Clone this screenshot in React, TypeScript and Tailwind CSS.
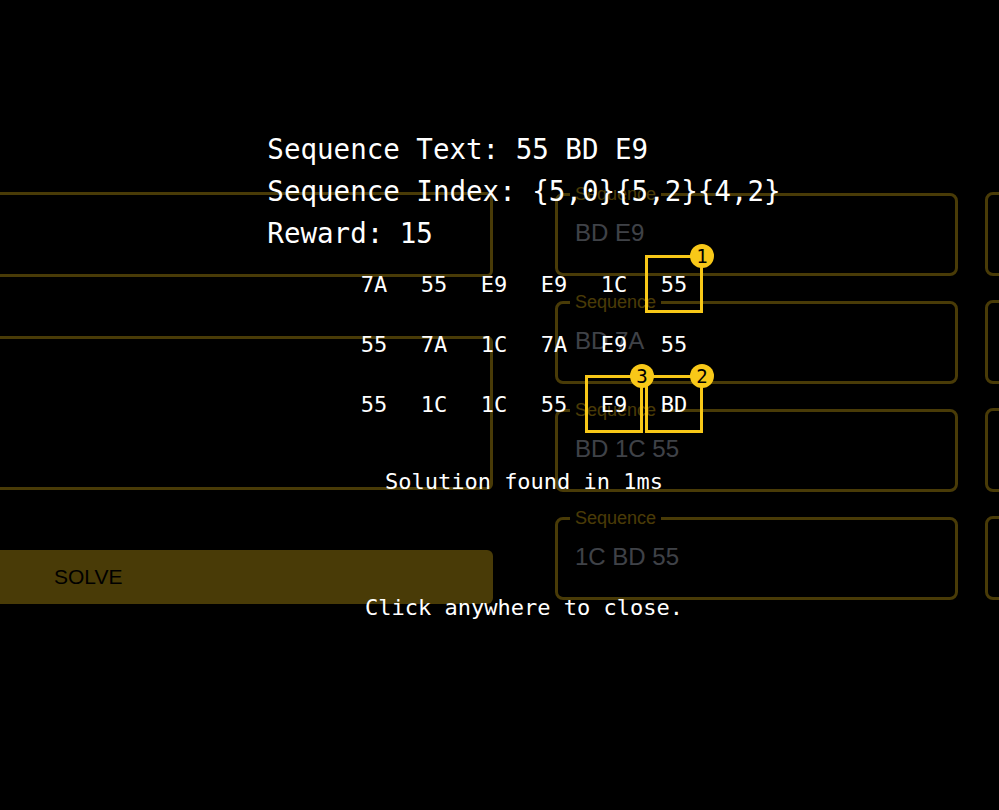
const grid = [
  ['7A', '55', 'E9', 'E9', '1C', '55'],
  ['55', '7A', '1C', '7A', 'E9', '55'],
  ['55', '1C', '1C', '55', 'E9', 'BD'],
];

// solution path as {x,y} -> step number
const path: Record<string, number> = { '5,0': 1, '5,2': 2, '4,2': 3 };

const sequences = ['BD E9', 'BD 7A', 'BD 1C 55', '1C BD 55'];

function SequenceBox({ text }: { text: string }) {
  return (
    <fieldset className="h-[92px] rounded-lg border-[3px] border-[#f5c518] pl-[17px] pr-[15px] pt-[15px]">
      <legend className="-ml-[5px] px-[5px] text-[18px] leading-[20px] text-[#f5c518]">Sequence</legend>
      <div className="text-[24px] leading-[28px] text-[#d2dcee]">{text}</div>
    </fieldset>
  );
}

function Cell({ value, x, y }: { value: string; x: number; y: number }) {
  const step = path[`${x},${y}`];
  return (
    <div className="relative flex h-[60px] w-[60px] items-center justify-center">
      {step && (
        <div className="absolute inset-[1px] border-[3px] border-[#f8c818]">
          <span className="absolute -right-[14px] -top-[14px] z-10 flex h-[24px] w-[24px] items-center justify-center rounded-full bg-[#f8c818] text-[19px] leading-none text-black">
            {step}
          </span>
        </div>
      )}
      <span className="relative">{value}</span>
    </div>
  );
}

export default function App() {
  return (
    <div className="relative h-[810px] w-full overflow-hidden bg-black font-['Liberation_Sans',Arial,sans-serif]">
      {/* page underneath */}
      <div className="flex items-start pt-[184px]">
        <div className="-ml-[40px] mt-[8px] flex w-[533px] shrink-0 flex-col">
          <div className="h-[85px] rounded-md border-[3px] border-[#f5c518]" />
          <div className="mt-[59px] h-[154px] rounded-md border-[3px] border-[#f5c518]" />
          <button className="mt-[60px] flex h-[54px] items-center rounded-md bg-[#f5c518] pl-[94px] text-[21px] text-black">
            SOLVE
          </button>
        </div>
        <div className="ml-[62px] flex w-[403px] shrink-0 flex-col gap-[16px]">
          {sequences.map((s) => (
            <SequenceBox key={s} text={s} />
          ))}
        </div>
        <div className="ml-[27px] mt-[8px] flex w-[403px] shrink-0 flex-col gap-[24px]">
          {sequences.map((s) => (
            <div key={s} className="h-[84px] rounded-lg border-[3px] border-[#f5c518]" />
          ))}
        </div>
      </div>

      {/* result overlay */}
      <div className="absolute inset-0 flex flex-col items-center bg-black/70 pl-[49px] pt-[128px] font-['DejaVu_Sans_Mono',monospace] text-white">
        <div className="text-[27.5px] leading-[42px]">
          <div>Sequence Text: 55 BD E9</div>
          <div>Sequence Index: {'{5,0}{5,2}{4,2}'}</div>
          <div>Reward: 15</div>
        </div>
        <div className="flex flex-col text-[22px]">
          {grid.map((row, y) => (
            <div key={y} className="flex">
              {row.map((v, x) => (
                <Cell key={x} value={v} x={x} y={y} />
              ))}
            </div>
          ))}
        </div>
        <div className="mt-[33px] text-[22px] leading-[30px]">Solution found in 1ms</div>
        <div className="mt-[96px] text-[22px] leading-[30px]">Click anywhere to close.</div>
      </div>
    </div>
  );
}
